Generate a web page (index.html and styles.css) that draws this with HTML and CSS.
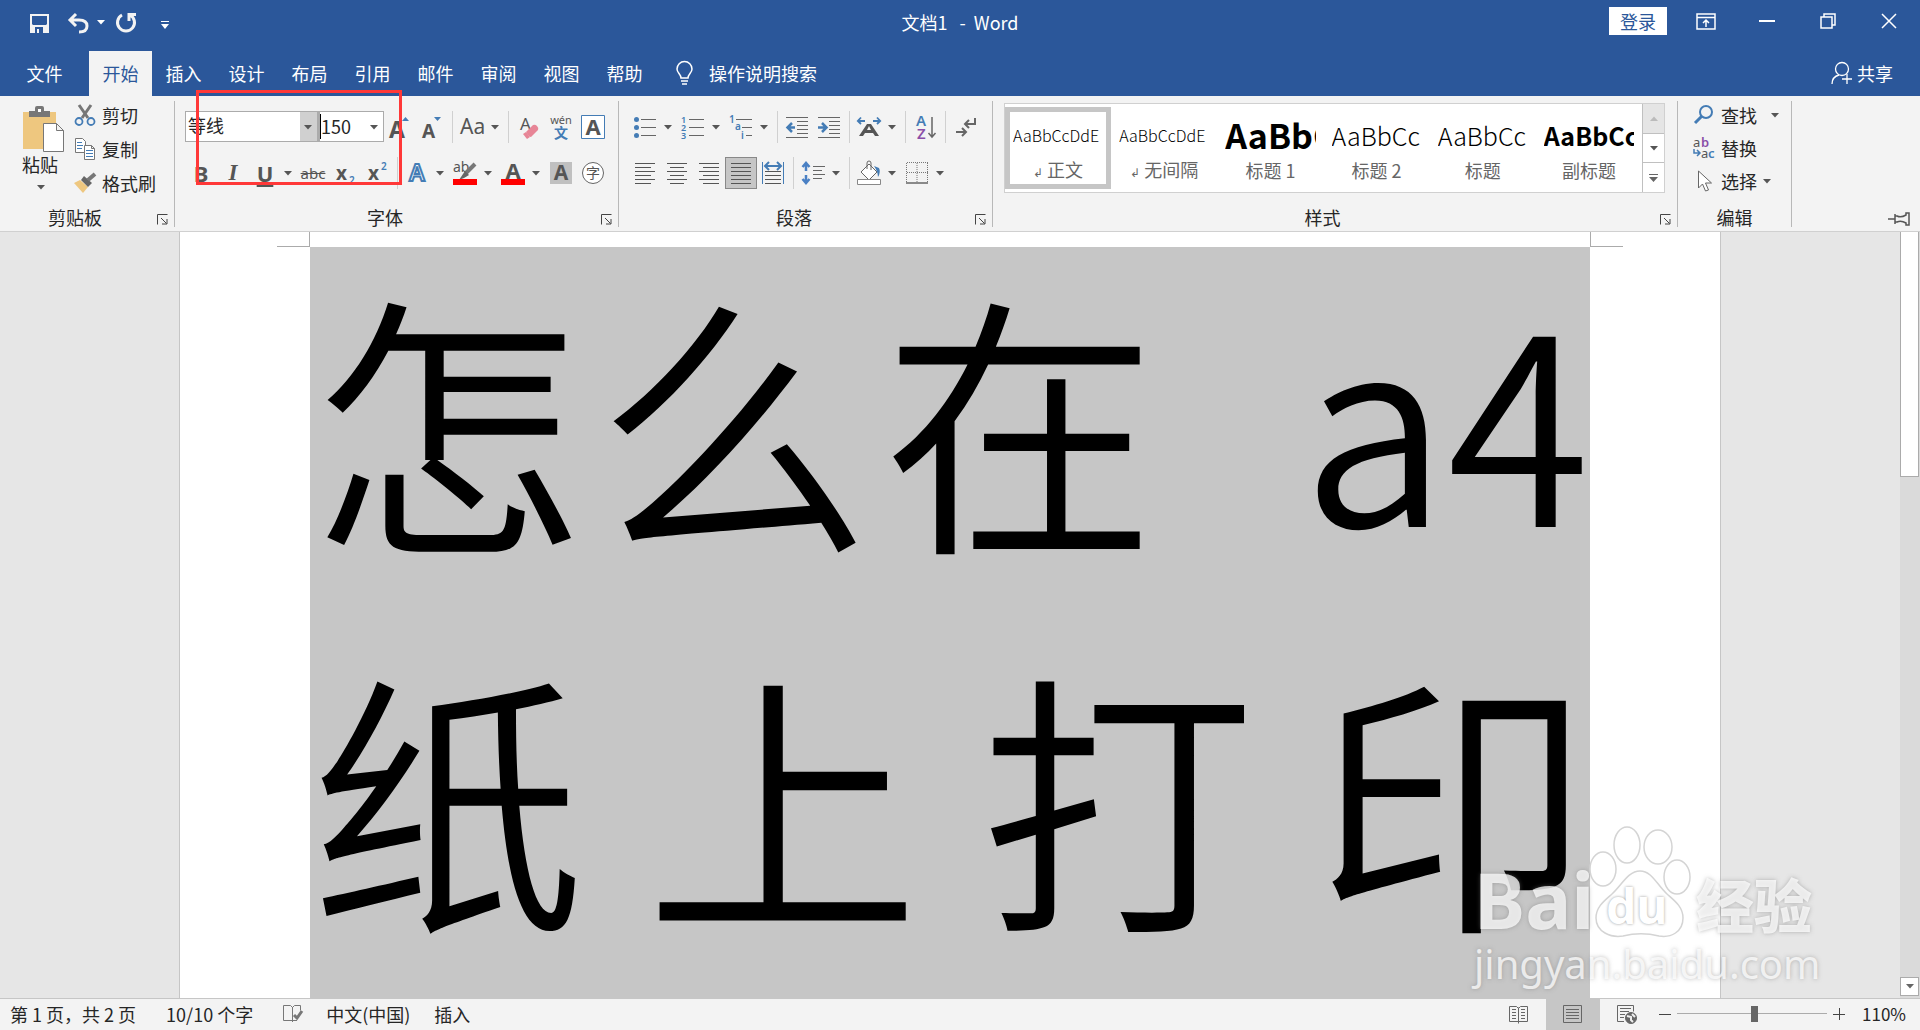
FILE: index.html
```html
<!DOCTYPE html>
<html lang="zh-CN">
<head>
<meta charset="utf-8">
<title>文档1 - Word</title>
<link rel="stylesheet" href="styles.css">
</head>
<body>
<svg class="defs" aria-hidden="true">
  <symbol id="arrow" viewBox="0 0 8 5"><path d="M0 0h8L4 4.5z" fill="currentColor"/></symbol>
  <symbol id="launch" viewBox="0 0 11 11"><path d="M.5 10.500V.5h10M4 4l5.500 5.500M10 5v5H5" fill="none" stroke="#444"/></symbol>
</svg>
<div class="app">
<header class="title-bar">
  <div class="quick">
    <button class="save" aria-label="保存"><svg width="19" height="20" viewBox="0 0 19 20"><path fill="#f3f3f3" fill-rule="evenodd" d="M0 1h19v19H0zM2 3v8l1 1h13l1-1V3zM5 14v6h2v-4h2v4h4v-6z"/></svg></button>
    <button class="wide" aria-label="撤消"><svg width="22" height="20" viewBox="0 0 22 20"><path d="M9 1 3 7l6 6M3 7h9c5 0 8 2 8 6s-3 6-8 6" fill="none" stroke="#f3f3f3" stroke-width="3"/></svg><svg class="arr" width="8" height="5"><use href="#arrow"/></svg></button>
    <button aria-label="重复"><svg width="22" height="22" viewBox="0 0 22 22"><path d="M7 3a8.500 8.500 0 1 0 8 0M14 9V2.500h7" fill="none" stroke="#f3f3f3" stroke-width="3"/></svg></button>
    <button class="custom" aria-label="自定义快速访问工具栏"><svg width="8" height="8" viewBox="0 0 8 8"><path d="M0 0h8v1H0zM0 3h8L4 8z" fill="#fff"/></svg></button>
  </div>
  <h1 class="doc-name">文档1&nbsp;&nbsp; -&nbsp; Word</h1>
  <div class="window-tools">
    <button class="login">登录</button>
    <button aria-label="功能区显示选项"><svg width="20" height="17" viewBox="0 0 20 17" fill="none" stroke="#fff" stroke-width="1.500"><path d="M1 1h18v15H1zM1 4.500h18M10 14V7M7 10l3-3 3 3"/></svg></button>
    <button aria-label="最小化"><svg width="16" height="16"><path d="M0 8h16" stroke="#fff" stroke-width="2"/></svg></button>
    <button aria-label="还原"><svg width="16" height="16" viewBox="0 0 16 16" fill="none" stroke="#fff" stroke-width="1.500"><path d="M1 4h11v11H1zM4 4V1h11v11h-3"/></svg></button>
    <button aria-label="关闭"><svg width="16" height="16" viewBox="0 0 16 16"><path d="m1 1 14 14M15 1 1 15" stroke="#fff" stroke-width="1.500"/></svg></button>
  </div>
</header>
<nav class="tabs">
  <button class="file">文件</button><button class="active">开始</button><button>插入</button><button>设计</button><button>布局</button><button>引用</button><button>邮件</button><button>审阅</button><button>视图</button><button>帮助</button>
  <button class="tell"><svg width="17" height="24" viewBox="0 0 17 24" fill="none" stroke="#fff" stroke-width="1.500"><path d="M5 17c0-4-4-5-4-9a7.500 7.500 0 0 1 15 0c0 4-4 5-4 9zM5 20h7M6 23h5"/></svg>操作说明搜索</button>
  <button class="share"><svg width="22" height="24" viewBox="0 0 22 24" fill="none" stroke="#fff" stroke-width="1.300"><circle cx="11" cy="8" r="6.500"/><path d="M1 23c0-5 3-8 7-9M11 18h10M16 13v10"/></svg>共享</button>
</nav>
<section class="ribbon" aria-label="功能区">
  <div class="group clipboard">
    <div class="clip-body">
      <button class="paste"><svg width="42" height="46" viewBox="0 0 42 46"><path d="M1 6h33v37H1z" fill="#eec77f"/><path d="M7 5h6V2q0-2 2-2h5q2 0 2 2v3h6v6H7z" fill="#777"/><path d="M16 3h3v3h-3z" fill="#fff"/><path d="M21.500 17.500h13l7 7v21h-20zM34.500 17.500v7h7" fill="#fff" stroke="#777"/></svg><span>粘贴</span><svg width="8" height="5"><use href="#arrow"/></svg></button>
      <div class="stack">
        <button class="line"><svg width="22" height="22" viewBox="0 0 22 22" fill="none"><path d="m5 1 9 13M17 1 8 14" stroke="#777" stroke-width="3"/><circle cx="5" cy="17.500" r="3.500" stroke="#447cb5" stroke-width="1.800"/><circle cx="17" cy="17.500" r="3.500" stroke="#447cb5" stroke-width="1.800"/></svg>剪切</button>
        <button class="line"><svg width="22" height="22" viewBox="0 0 22 22" fill="#fff" stroke="#777"><path d="M1.500.5h7l3 3v11h-10z"/><path d="M3 4.500h5M3 7.500h6M3 10.500h5" stroke="#447cb5"/><path d="M10.500 7.500h7l3 3v11h-10zM17.500 7.500v3h3"/><path d="M12 12.500h7M12 15.500h7M12 18.500h7" stroke="#447cb5"/></svg>复制</button>
        <button class="line"><svg width="22" height="20" viewBox="0 0 22 20"><path d="m0 10 6-3 8 7-5 6z" fill="#eec77f"/><path d="m7 7 3-4 8 7-4 4z" fill="#666"/><path d="m14 7 7-6" stroke="#777" stroke-width="4"/></svg>格式刷</button>
      </div>
    </div>
    <footer>剪贴板<button class="launcher" aria-label="剪贴板选项"><svg width="11" height="11"><use href="#launch"/></svg></button></footer>
  </div>
  <div class="group font">
    <div class="row">
      <div class="combo name"><select aria-label="字体"><option>等线</option></select><svg width="8" height="5"><use href="#arrow"/></svg></div>
      <div class="combo size"><select aria-label="字号"><option>150</option></select><svg width="8" height="5"><use href="#arrow"/></svg></div>
      <button aria-label="增大字号"><svg width="24" height="26" viewBox="0 0 24 26"><text x="1" y="24" class="g" font-size="23">A</text><path d="m14 7 3.500-4L21 7z" fill="#447cb5"/></svg></button>
      <button aria-label="减小字号"><svg width="24" height="26" viewBox="0 0 24 26"><text x="2" y="24" class="g" font-size="19">A</text><path d="m14 3 3.500 4L21 3z" fill="#447cb5"/></svg></button>
      <i class="sep"></i>
      <button class="split" aria-label="更改大小写"><svg width="24" height="24"><text x="0" y="19" class="t" font-size="21">Aa</text></svg><svg class="arr" width="8" height="5"><use href="#arrow"/></svg></button>
      <i class="sep end"></i>
      <button aria-label="清除格式"><svg width="24" height="26" viewBox="0 0 24 26"><text x="3" y="16" class="t" font-size="17">A</text><path d="m9 18 7-7q2-1 4 1t1 4l-7 7q-2 0-5-5z" fill="#e78596"/><path d="m6 20 3-2 4 5-3 2z" fill="#e78596"/></svg></button>
      <button aria-label="拼音指南"><svg width="24" height="26" viewBox="0 0 24 26"><text x="12" y="10" text-anchor="middle" class="t" font-size="11">wén</text><text x="12" y="24" text-anchor="middle" class="b" font-size="14">文</text></svg></button>
      <button aria-label="字符边框"><svg width="24" height="24"><path d="M.5.5h23v23H.5z" fill="#fff" stroke="#447cb5"/><text x="12" y="20" text-anchor="middle" class="g" font-size="22">A</text></svg></button>
    </div>
    <div class="row">
      <button aria-label="加粗"><b>B</b></button>
      <button aria-label="倾斜"><em>I</em></button>
      <button class="split" aria-label="下划线"><u>U</u><svg class="arr" width="8" height="5"><use href="#arrow"/></svg></button>
      <button aria-label="删除线"><s>abc</s></button>
      <button aria-label="下标"><svg width="24" height="26"><text x="3" y="20" class="g" font-size="19">x</text><text x="16" y="24" class="b" font-size="10">2</text></svg></button>
      <button aria-label="上标"><svg width="24" height="26"><text x="3" y="20" class="g" font-size="19">x</text><text x="16" y="10" class="b" font-size="10">2</text></svg></button>
      <i class="sep"></i>
      <button class="split" aria-label="文本效果"><svg width="24" height="26"><text x="12" y="21" text-anchor="middle" font-size="23" class="glow">A</text></svg><svg class="arr" width="8" height="5"><use href="#arrow"/></svg></button>
      <button class="split" aria-label="突出显示"><svg width="24" height="26" viewBox="0 0 24 26"><text x="0" y="12" class="t" font-size="14">ab</text><path d="m22 4-9 9" stroke="#777" stroke-width="4"/><path d="m12 11 4 4-5 3-5 2z" fill="#666"/><path d="M0 19h24v6H0z" fill="red"/></svg><svg class="arr" width="8" height="5"><use href="#arrow"/></svg></button>
      <button class="split" aria-label="字体颜色"><svg width="24" height="26"><text x="12" y="19" text-anchor="middle" class="g" font-size="22">A</text><path d="M0 19h24v6H0z" fill="red"/></svg><svg class="arr" width="8" height="5"><use href="#arrow"/></svg></button>
      <button aria-label="字符底纹"><svg width="22" height="22"><path d="M0 0h22v22H0z" fill="#c0c0c0"/><text x="11" y="18" text-anchor="middle" class="g" font-size="21">A</text></svg></button>
      <button aria-label="带圈字符"><svg width="24" height="24"><circle cx="12" cy="12" r="10.500" fill="#fff" stroke="#666"/><text x="12" y="17" text-anchor="middle" class="t" font-size="14">字</text></svg></button>
    </div>
    <footer>字体<button class="launcher" aria-label="字体选项"><svg width="11" height="11"><use href="#launch"/></svg></button></footer>
    <div class="highlight"></div>
  </div>
  <div class="group para">
    <div class="row">
      <button class="split" aria-label="项目符号"><svg width="24" height="24"><path d="M8 4.500h15M8 12.500h15M8 20.500h15" stroke="#666"/><g fill="#447cb5"><circle cx="3.500" cy="4.500" r="2.500"/><circle cx="3.500" cy="12.500" r="2.500"/><circle cx="3.500" cy="20.500" r="2.500"/></g></svg><svg class="arr" width="8" height="5"><use href="#arrow"/></svg></button>
      <button class="split" aria-label="编号"><svg width="24" height="24"><path d="M8 4.500h15M8 12.500h15M8 20.500h15" stroke="#666"/><g class="b" font-size="9"><text x="0" y="8">1</text><text x="0" y="16">2</text><text x="0" y="24">3</text></g></svg><svg class="arr" width="8" height="5"><use href="#arrow"/></svg></button>
      <button class="split" aria-label="多级列表"><svg width="24" height="24"><path d="M7 4.500h16M13 12.500h10M17 20.500h6" stroke="#666"/><g class="b" font-size="10"><text x="0" y="8">1</text><text x="6" y="15">a</text><text x="12" y="24">i</text></g></svg><svg class="arr" width="8" height="5"><use href="#arrow"/></svg></button>
      <i class="sep"></i>
      <button aria-label="减少缩进"><svg width="24" height="24"><path d="M1 2.500h22M12 6.500h11M12 10.500h11M12 14.500h11M12 18.500h11M1 22.500h22" stroke="#666"/><path d="M10 12.500H2M7 8l-4.500 4.500L7 17" fill="none" stroke="#447cb5" stroke-width="2.500"/></svg></button>
      <button aria-label="增加缩进"><svg width="24" height="24"><path d="M1 2.500h22M12 6.500h11M12 10.500h11M12 14.500h11M12 18.500h11M1 22.500h22" stroke="#666"/><path d="M1 12.500h8M5 8l4.500 4.500L5 17" fill="none" stroke="#447cb5" stroke-width="2.500"/></svg></button>
      <i class="sep"></i>
      <button class="split" aria-label="中文版式"><svg width="24" height="24"><path d="M1 6h7M4 2.500.8 6 4 9M16 6h7M20 2.500 23.200 6 20 9" fill="none" stroke="#447cb5" stroke-width="1.800"/><path fill-rule="evenodd" d="m2 21 8-12h4l8 12h-4l-2-3H8l-2 3zm8-6h4l-2-4z" fill="#555"/></svg><svg class="arr" width="8" height="5"><use href="#arrow"/></svg></button>
      <i class="sep"></i>
      <button aria-label="排序"><svg width="24" height="26"><text x="3" y="12" class="b" font-size="15">A</text><text x="4" y="25" class="p" font-size="15">Z</text><path d="M19 3v20M15.500 19l3.500 4 3.500-4" fill="none" stroke="#666" stroke-width="1.500"/></svg></button>
      <i class="sep end"></i>
      <button aria-label="显示编辑标记"><svg width="24" height="24" fill="none" stroke="#666" stroke-width="2"><path d="M21 3v6h-9M15 5l-4 4 4 4M2 17h10M8 13l4 4-4 4"/></svg></button>
    </div>
    <div class="row">
      <button aria-label="左对齐"><svg width="22" height="22"><path d="M1 1.500h20M1 5.500h16M1 9.500h20M1 13.500h16M1 17.500h20M1 21.500h16" stroke="#555"/></svg></button>
      <button aria-label="居中"><svg width="22" height="22"><path d="M1 1.500h20M4 5.500h14M1 9.500h20M4 13.500h14M1 17.500h20M4 21.500h14" stroke="#555"/></svg></button>
      <button aria-label="右对齐"><svg width="22" height="22"><path d="M1 1.500h20M5 5.500h16M1 9.500h20M5 13.500h16M1 17.500h20M5 21.500h16" stroke="#555"/></svg></button>
      <button class="on" aria-label="两端对齐"><svg width="22" height="22"><path d="M1 1.500h20M1 5.500h20M1 9.500h20M1 13.500h20M1 17.500h20M1 21.500h20" stroke="#555"/></svg></button>
      <button aria-label="分散对齐"><svg width="24" height="24"><path d="M1.500 1v22M22.500 1v22" stroke="#447cb5"/><path d="M5 5h14M8 1 4 5l4 4M16 1l4 4-4 4" fill="none" stroke="#447cb5" stroke-width="2"/><path d="M4 10.500h16M4 14.500h16M4 18.500h16M4 22.500h16" stroke="#555"/></svg></button>
      <i class="sep"></i>
      <button class="split" aria-label="行距"><svg width="24" height="24"><path d="M5 2v8M5 22v-8M1.500 6 5 2l3.500 4M1.500 18 5 22l3.500-4" fill="none" stroke="#4a80c4" stroke-width="2.500"/><path d="M12 5.500h12M12 9.500h9M12 13.500h12M12 17.500h9" stroke="#666"/></svg><svg class="arr" width="8" height="5"><use href="#arrow"/></svg></button>
      <i class="sep"></i>
      <button class="split" aria-label="底纹"><svg width="24" height="26" viewBox="0 0 24 26"><path d="m12 4 8 8-8 8-8-8z" fill="#fff" stroke="#666"/><path d="M10 9V3q0-2 2-2t2 2v7" fill="none" stroke="#666"/><path d="m17 6 5 2q2 4-1 9 0-5-4-11z" fill="#447cb5"/><path d="M.5 19.500h23v5H.5z" fill="#fff" stroke="#888"/></svg><svg class="arr" width="8" height="5"><use href="#arrow"/></svg></button>
      <button class="split" aria-label="边框"><svg width="24" height="22"><path d="M2 .5h21M1.500 1v20M22.500 1v20M12 1v20M2 10.500h21" stroke="#777" stroke-dasharray="1 1"/><path d="M1 21h22" stroke="#666" stroke-width="1.500"/></svg><svg class="arr" width="8" height="5"><use href="#arrow"/></svg></button>
    </div>
    <footer>段落<button class="launcher" aria-label="段落选项"><svg width="11" height="11"><use href="#launch"/></svg></button></footer>
  </div>
  <div class="group styles">
    <div class="gallery">
      <button class="style chosen"><span class="sample">AaBbCcDdE</span><span class="cap"><small>↲</small> 正文</span></button>
      <button class="style"><span class="sample">AaBbCcDdE</span><span class="cap"><small>↲</small> 无间隔</span></button>
      <button class="style"><span class="sample h1">AaBbC</span><span class="cap">标题 1</span></button>
      <button class="style"><span class="sample h2">AaBbCc</span><span class="cap">标题 2</span></button>
      <button class="style"><span class="sample h2">AaBbCc</span><span class="cap">标题</span></button>
      <button class="style"><span class="sample h2 strong">AaBbCc</span><span class="cap">副标题</span></button>
      <div class="scroller">
        <button class="off" aria-label="上一行"><svg class="up" width="8" height="5"><use href="#arrow"/></svg></button>
        <button aria-label="下一行"><svg width="8" height="5"><use href="#arrow"/></svg></button>
        <button aria-label="其他"><svg width="9" height="8" viewBox="0 0 9 8"><path d="M0 0h9v1H0zM0 3h9L4.500 8z" fill="#666"/></svg></button>
      </div>
    </div>
    <footer>样式<button class="launcher" aria-label="样式选项"><svg width="11" height="11"><use href="#launch"/></svg></button></footer>
  </div>
  <div class="group edit">
    <div class="stack">
      <button class="line"><svg width="22" height="22" viewBox="0 0 22 22" fill="none" stroke="#447cb5"><circle cx="13" cy="8" r="6" stroke-width="2"/><path d="m9 12-7 7" stroke-width="3"/></svg>查找<svg class="far" width="8" height="5"><use href="#arrow"/></svg></button>
      <button class="line"><svg width="22" height="24" viewBox="0 0 22 24"><text x="0" y="11" class="t" font-size="13">a</text><text x="8" y="11" class="p" font-size="13">b</text><text x="8" y="22" class="t" font-size="13">a</text><text x="15" y="22" class="b" font-size="13">c</text><path d="M1 13v4h5M4 14l3 3-3 3" fill="none" stroke="#447cb5" stroke-width="1.500"/></svg>替换</button>
      <button class="line"><svg width="22" height="22" viewBox="0 0 22 22"><path d="M5.500 1v17l4-4 3 7 3-1-3-7h6z" fill="#fff" stroke="#666"/></svg>选择<svg width="8" height="5"><use href="#arrow"/></svg></button>
    </div>
    <footer>编辑</footer>
  </div>
  <button class="pin" aria-label="固定功能区"><svg width="22" height="14" viewBox="0 0 22 14" fill="none" stroke="#555" stroke-width="1.500"><path d="M0 7h7M7 2v10M7 4h2q4 2 9-1V1h3v12h-3v-2q-5-3-9-1H7"/></svg></button>
</section>
<main class="workspace">
  <div class="canvas">
    <article class="page">
      <div class="margin-marks"><i></i><i></i></div>
      <div class="selection">
        <p><span>怎</span><span>么</span><span>在</span><span class="latin">&nbsp;a4</span></p>
        <p><span>纸</span><span>上</span><span>打</span><span>印</span></p>
      </div>
    </article>
  </div>
  <div class="scrollbar"><div class="thumb"></div><button aria-label="向下滚动"><svg width="8" height="5"><use href="#arrow"/></svg></button></div>
  <div class="watermark">
    <div class="brand"><span class="bai">Bai</span><div class="paw"><svg width="104" height="112" viewBox="0 0 104 112"><g fill="#fff" stroke="#d4d4d4" stroke-width="1.500"><ellipse cx="14" cy="43" rx="13" ry="17"/><ellipse cx="38" cy="19" rx="13" ry="18"/><ellipse cx="69" cy="21" rx="14" ry="17"/><ellipse cx="88" cy="51" rx="13" ry="17"/><path d="M51 45c12 0 17 14 27 23 8 7 16 13 16 24 0 14-12 20-24 18-12-3-24-3-36 0-12 2-27-4-27-18 0-11 8-17 16-24 10-9 16-23 28-23z"/></g></svg><span class="du">du</span></div><span class="jing">经验</span></div>
    <div class="url">jingyan.baidu.com</div>
  </div>
</main>
<footer class="status">
  <button>第 1 页，共 2 页</button><button>10/10 个字</button>
  <button aria-label="校对"><svg width="20" height="19" viewBox="0 0 20 19" fill="none" stroke="#777"><path d="M9.500 3v15M9 16.500H.5V1.500h7l2 2 2-2h6v5M10 16.500h4"/><path d="m11 11 3 3 5-7" stroke-width="3"/></svg></button>
  <button class="lang">中文(中国)</button><button>插入</button>
  <div class="views">
    <button aria-label="阅读视图"><svg width="20" height="19" viewBox="0 0 20 19" fill="none" stroke="#666"><path d="M9.500 2.500v16M9 16.500H.5V1.500h7l2 2 2-2h7v15H10M3 4.500h4M3 7.500h4M3 10.500h4M3 13.500h4M12 4.500h4M12 7.500h4M12 10.500h4M12 13.500h4"/></svg></button>
    <button class="on" aria-label="页面视图"><svg width="20" height="19" fill="none" stroke="#666"><path d="M.5.5h18v17H.5zM3 4.500h13M3 7.500h13M3 10.500h13M3 13.500h13"/></svg></button>
    <button aria-label="Web 版式"><svg width="21" height="20" viewBox="0 0 21 20" fill="none" stroke="#666"><path d="M7 16.500H.5V.5h16v6M3 3.500h11M3 6.500h9M3 9.500h5M3 12.500h4"/><circle cx="14" cy="13" r="5.500" fill="#666"/><path d="m10 11 4 1v3l2 2M15 9l3 3" stroke="#eee" stroke-width="2"/></svg></button>
  </div>
  <div class="zoom">
    <button aria-label="缩小"><svg width="12" height="12"><path d="M0 6.500h12" stroke="#444"/></svg></button>
    <input type="range" min="10" max="210" value="113" aria-label="显示比例">
    <button aria-label="放大"><svg width="12" height="12"><path d="M0 6.500h12M6.500 0v12" stroke="#444"/></svg></button>
  </div>
  <button class="percent">110%</button>
</footer>
</div>
</body>
</html>
```
FILE: styles.css
```css
* { box-sizing: border-box; }
body {
  margin: 0;
  font: 18px/24px "Noto Sans CJK SC", sans-serif;
  color: #262626;
}
button { font: inherit; color: inherit; background: none; border: 0; padding: 0; white-space: nowrap; }
svg { display: block; flex: none; overflow: visible; }
.defs { position: absolute; width: 0; height: 0; }
.app { display: flex; flex-direction: column; height: 100vh; overflow: hidden; }

/* Title bar */
.title-bar {
  display: grid;
  grid-template-columns: 1fr auto 1fr;
  height: 51px;
  background: #2b579a;
  color: #fff;
}
.quick { display: flex; align-items: center; gap: 10px; padding: 0 0 0 30px; height: 45px; }
.quick .save { margin-right: 8px; }
.quick .wide { display: flex; align-items: center; gap: 8px; }
.quick .custom { margin: 4px 0 0 14px; }
.doc-name { margin: 0; font-size: 18px; font-weight: 400; line-height: 44px; white-space: pre; }
.window-tools { display: flex; justify-content: flex-end; align-items: center; height: 42px; padding-right: 1px; }
.window-tools button { width: 61px; display: grid; place-items: center; }
.window-tools .login { width: 58px; height: 28px; margin-right: 8px; background: #fff; color: #2b579a; }

/* Ribbon tabs */
.tabs { display: flex; height: 45px; background: #2b579a; color: #fff; }
.tabs button { width: 63px; padding-bottom: 2px; }
.tabs .file { width: 89px; }
.tabs .active { background: #f3f3f3; color: #2b579a; }
.tabs .tell, .tabs .share { width: auto; display: flex; align-items: center; gap: 16px; margin-left: 20px; }
.tabs .share { margin: 0 27px 0 auto; gap: 4px; }

/* Ribbon */
.ribbon {
  display: flex;
  position: relative;
  height: 136px;
  padding: 5px 0 4px;
  background: #f3f3f3;
  border-bottom: 1px solid #d0d0d0;
}
.group { position: relative; flex: none; display: flex; flex-direction: column; border-right: 1px solid #b8b8b8; }
.group footer { display: flex; justify-content: center; align-items: center; margin-top: auto; height: 20px; padding-right: 24px; }
.launcher { position: absolute; right: 6px; bottom: 2px; }
.ribbon svg { color: #555; }
.ribbon text { font-family: "Noto Sans", "Noto Sans CJK SC", sans-serif; }
.g { fill: #555; font-weight: 700; }
.t { fill: #555; }
.b { fill: #447cb5; font-weight: 600; }
.p { fill: #8a4fa8; font-weight: 600; }
.glow { fill: #fff; stroke: #447cb5; stroke-width: 2px; font-weight: 600; }
.clipboard { width: 175px; }
.clip-body { display: flex; gap: 10px; padding: 2px 0 0 22px; }
.paste { display: flex; flex-direction: column; align-items: center; width: 42px; padding-top: 3px; }
.paste span { margin: 0 0 9px; padding-right: 6px; }
.paste svg:last-child { margin-right: 4px; }
.stack { display: flex; flex-direction: column; gap: 10px; }
.line { display: flex; align-items: center; gap: 6px; height: 24px; }
.line .far { margin-left: 8px; }

.row { display: flex; height: 32px; }
.row > button { width: 32px; height: 32px; display: grid; place-items: center; }
.row > .split { display: flex; width: 48px; align-items: center; }
.split > :first-child { margin: 0 4px; min-width: 24px; }
.split > .arr { margin-left: 3px; }
.row > .on { background: #c6c6c6; border: 1px solid #888; }
.sep { width: 8px; height: 32px; display: flex; justify-content: center; }
.sep::before { content: ""; width: 1px; background: #d0d0d0; }
.sep.end { margin-right: 1px; }
.font { width: 444px; padding: 10px 9px 0 10px; }
.font .row + .row, .para .row + .row { margin-top: 14px; }
.row b, .row em, .row u { font: 700 22px/24px "Noto Sans", sans-serif; color: #555; }
.row em { font: italic 700 23px/24px "Liberation Serif", serif; }
.row u { text-decoration-thickness: 2px; text-underline-offset: 3px; }
.row s { font: 15px/24px "Noto Sans", sans-serif; color: #555; }
.combo { position: relative; height: 31px; border: 1px solid #ababab; background: #fff; }
.combo select { appearance: none; width: 100%; height: 29px; border: 0; padding: 0 0 2px 2px; font: inherit; line-height: 27px; color: #262626; background: none; }
.combo svg { position: absolute; right: 5px; top: 13px; }
.name { width: 133px; background: linear-gradient(to left, #d0d0d0 17px, #fff 17px); }
.size { width: 66px; border-left: 2px solid #ababab; }
.combo.size select { border-left: 1px solid #000; height: 25px; margin: 2px 0; padding: 0; line-height: 23px; }
.highlight { position: absolute; left: 21px; top: -11px; width: 206px; height: 95px; border: 3px solid #ff3838; pointer-events: none; }
.para { width: 374px; padding: 10px 9px 0 10px; }

/* Style gallery */
.styles { flex: 1 1 0; min-width: 0; padding: 2px 12px 0 11px; }
.gallery { display: flex; height: 90px; border: 1px solid #d0d0d0; background: #fff; }
.style { flex: 1 1 0; min-width: 0; margin: 3px 0; border: 5px solid transparent; padding: 4px 3px 0; display: flex; flex-direction: column; }
.style.chosen { border-color: #c6c6c6; }
.sample { width: 100%; height: 38px; overflow: hidden; text-align: left; line-height: 38px; font-size: 16px; font-weight: 300; color: #000; }
.sample.h1 { font-size: 34px; font-weight: 700; }
.sample.h2 { font-size: 25px; }
.sample.strong { font-weight: 700; }
.cap { width: 100%; padding-top: 4px; color: #666; }
.cap small { font-size: 12px; }
.scroller { display: flex; flex-direction: column; width: 22px; border-left: 1px solid #c0c0c0; }
.scroller button { flex: 1; display: grid; place-items: center; }
.scroller button + button { border-top: 1px solid #c0c0c0; }
.scroller .off { background: #e5e5e5; }
.scroller .off svg { color: #bbb; }
.up { transform: rotate(180deg); }
.edit { width: 114px; padding: 2px 0 0 15px; }
.edit .stack { gap: 9px; }
.edit footer { padding-right: 15px; }
.pin { margin: auto 10px 1px auto; padding-left: 96px; }

/* Document area */
.workspace { position: relative; flex: 1; display: flex; min-height: 0; background: #e6e6e6; }
.canvas { flex: 1; overflow: hidden; }
.page { max-width: 1542px; height: 100%; margin: 0 auto; padding: 0 130px; background: #fff; border: solid #c6c6c6; border-width: 0 1px; display: flex; flex-direction: column; }
.margin-marks { display: flex; justify-content: space-between; height: 15px; margin: 0 -33px; flex: none; }
.margin-marks i { width: 33px; border: solid #ababab; border-width: 0 1px 1px 0; }
.margin-marks i + i { border-width: 0 0 1px 1px; }
.selection { flex: 1; min-height: 0; background: #c6c6c6; overflow: hidden; }
.selection p { display: flex; justify-content: space-between; gap: 11px; margin: 0 0 44px; font-size: 275px; line-height: 334px; font-weight: 350; color: #000; white-space: nowrap; }
.selection .latin { margin-left: auto; font-size: 260px; }
.scrollbar { width: 20px; background: #dadada; display: flex; flex-direction: column; justify-content: space-between; }
.thumb { height: 32%; width: 19px; background: #fff; border: 1px solid #ababab; border-top: 0; }
.scrollbar button { width: 19px; height: 19px; margin-bottom: 2px; background: #fff; border: 1px solid #ababab; display: grid; place-items: center; color: #666; }

/* Watermark */
.watermark { position: absolute; right: 102px; bottom: 8px; width: 344px; color: rgba(255, 255, 255, .75); text-shadow: 0 0 4px rgba(120, 120, 120, .5); }
.brand { display: flex; align-items: flex-end; }
.bai { width: 115px; font: 700 77px/76px "Noto Sans", sans-serif; }
.paw { position: relative; width: 107px; height: 112px; }
.du { position: absolute; left: 17px; top: 56px; font: 700 48px/48px "Noto Sans", sans-serif; color: #fff; text-shadow: 0 0 3px #999; }
.jing { font-size: 58px; line-height: 70px; font-weight: 900; }
.url { font: 40px/52px "Noto Sans", sans-serif; }

/* Status bar */
.status { display: flex; align-items: center; height: 32px; border-top: 1px solid #c6c6c6; background: #f3f3f3; padding: 0 14px 2px 10px; gap: 30px; }
.status .lang { margin: 0 -6px 0 -7px; }
.views { display: flex; margin: 0 0 -2px auto; align-self: stretch; }
.views button { width: 54px; display: grid; place-items: center; }
.views .on { background: #c6c6c6; }
.zoom { display: flex; align-items: center; gap: 6px; margin: 0 -13px 0 -25px; }
.percent { font-size: 17px; }
.zoom input { appearance: none; width: 150px; height: 18px; margin: 0; background: linear-gradient(#ababab, #ababab) center / 100% 1px no-repeat; }
.zoom input::-webkit-slider-thumb { appearance: none; width: 7px; height: 16px; background: #666; }
```
